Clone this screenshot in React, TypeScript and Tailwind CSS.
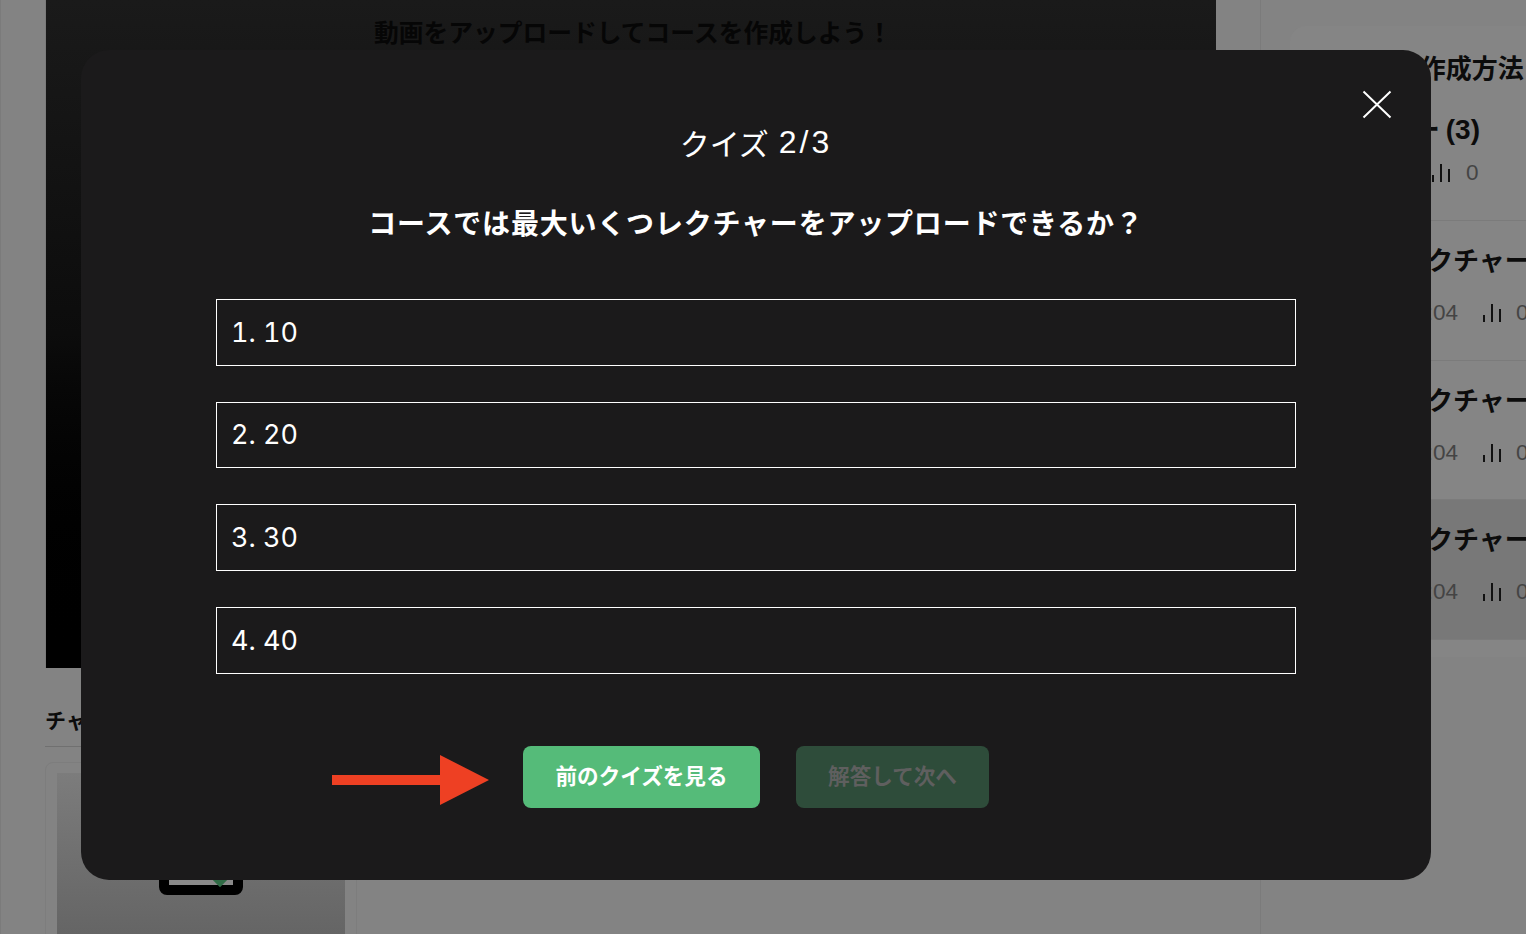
import React from "react";

const jp = "font-['Noto_Sans_CJK_JP','Noto_Sans',sans-serif]";
const latin = "font-['Liberation_Sans','Noto_Sans_CJK_JP',sans-serif]";

const options = ["1. 10", "2. 20", "3. 30", "4. 40"];

function BarsIcon() {
  return (
    <svg width="18" height="18" viewBox="0 0 18 18" className="shrink-0 text-[#111]">
      <path d="M1 11v7M9 0v18M17 5v13" stroke="currentColor" strokeWidth="2" fill="none" />
    </svg>
  );
}

function LectureRow({ active }: { active?: boolean }) {
  return (
    <div className={`h-[139.5px] border-b border-[#7b7b7b] pl-[33px] pt-[21px] ${active ? "bg-[#787878]" : ""}`}>
      <div className="whitespace-nowrap text-[26px] leading-[34px] font-bold text-[#0c0c0c]">テストレクチャー１</div>
      <div className="mt-[23px] flex items-center whitespace-nowrap">
        <span className={`w-[135px] text-right text-[22.5px] leading-[28px] text-[#444] ${latin}`}>00:04</span>
        <span className="ml-[25px]"><BarsIcon /></span>
        <span className={`ml-[15px] text-[22.5px] leading-[28px] text-[#444] ${latin}`}>0</span>
      </div>
    </div>
  );
}

export default function App() {
  return (
    <div className={`relative h-[934px] w-[1526px] overflow-hidden bg-[#838383] ${jp}`}>
      {/* page behind the dialog */}
      <div className="flex h-full">
        <div className="h-full w-[1261px] shrink-0 border-x border-[#7b7b7b] pl-[44px]">
          <div className="h-[668px] w-[1171px] border-l border-[#7b7b7b] bg-gradient-to-b from-[#1a1a1a] via-[#0c0c0c] to-black pl-[4px] pt-[14px] text-center">
            <div className="whitespace-nowrap text-[24.75px] leading-[34px] font-bold text-[#060606]">
              動画をアップロードしてコースを作成しよう！
            </div>
          </div>
          <div className="mt-[36px] h-[43px] w-[312px] border-b border-[#707070] text-[21px] leading-[30px] font-bold text-[#0c0c0c]">
            チャプター
          </div>
          <div className="mt-[15px] h-[300px] w-[312px] rounded-t-[8px] border border-[#7d7d7d] px-[11px] pt-[10px]">
            <div className="flex h-[161px] justify-center bg-gradient-to-b from-[#7c7c7c] to-[#656565] pt-[60px]">
              <div className="h-[62px] w-[84px] rounded-[8px] border-[10px] border-black bg-[#8a8a8a] pl-[41px] pt-[20px]">
                <div className="h-[20px] w-[20px] rotate-45 bg-[#2f6b45]" />
              </div>
            </div>
          </div>
        </div>
        <div className="flex-1 pl-[29px] pt-[26px]">
          <div className="h-[631px] w-[300px] overflow-hidden rounded-t-[16px] bg-[#858585]">
            <div className="h-[195px] border-b border-[#7b7b7b] pl-[27px] pt-[23px]">
              <div className="whitespace-nowrap text-[26px] leading-[36px] font-bold text-[#0c0c0c]">コースの作成方法</div>
              <div className="-ml-[7px] mt-[25px] flex items-baseline whitespace-nowrap text-[26px] leading-[36px] font-bold text-[#0c0c0c]">
                チャプター
                <span className={`ml-[6px] text-[28px] ${latin}`}>(3)</span>
              </div>
              <div className="mt-[11px] flex items-center pl-[115px]">
                <BarsIcon />
                <span className={`ml-[16px] text-[22.5px] leading-[28px] text-[#444] ${latin}`}>0</span>
              </div>
            </div>
            <LectureRow />
            <LectureRow />
            <LectureRow active />
          </div>
        </div>
      </div>

      {/* quiz dialog */}
      <div className="absolute left-[81px] top-[50px] h-[830px] w-[1350px] rounded-[28px] bg-[#1b1a1b] pt-[73px] text-white">
        <button className="absolute left-[1281px] top-[40px] h-[29px] w-[30px]">
          <svg viewBox="0 0 30 29" className="h-full w-full" fill="none" stroke="white" strokeWidth="2">
            <path d="M1.5 1.5 L28.5 27.5 M28.5 1.5 L1.5 27.5" />
          </svg>
        </button>
        <div className="flex h-[38px] items-center justify-center text-[30px] leading-[38px]">
          クイズ
          <span className={`ml-[10px] text-[32px] tracking-[3px] ${latin}`}>2/3</span>
        </div>
        <div className="mt-[41px] text-center text-[28px] leading-[40px] font-bold tracking-[0.8px]">
          コースでは最大いくつレクチャーをアップロードできるか？
        </div>
        <div className="ml-[135px] mt-[57px] flex w-[1080px] flex-col gap-[36px]">
          {options.map((o) => (
            <div key={o} className="flex h-[66.67px] items-center border border-white pl-[14px] pt-[1px] font-['Inter',sans-serif] text-[27px] tabular-nums">
              {o}
            </div>
          ))}
        </div>
        <div className="ml-[251px] mt-[72px] flex items-center">
          <svg width="157" height="50" viewBox="0 0 157 50" className="mr-[34px] mt-[6px] shrink-0">
            <path d="M0 20 H108 V0 L157 25 L108 50 V30 H0 Z" fill="#ee4023" />
          </svg>
          <button className="h-[62px] w-[237px] rounded-[8px] bg-[#55bb79] pb-[3px] text-[21.6px] font-bold text-white">前のクイズを見る</button>
          <button className="ml-[36px] h-[62px] w-[193px] rounded-[8px] bg-[#2e4c3a] pb-[3px] text-[21.6px] font-bold text-[#5f5f5f]">解答して次へ</button>
        </div>
      </div>
    </div>
  );
}
